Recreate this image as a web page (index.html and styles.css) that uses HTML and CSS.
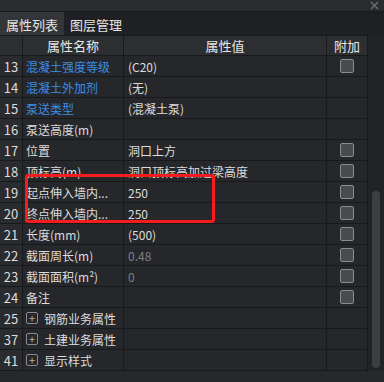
FILE: index.html
```html
<!DOCTYPE html>
<html lang="zh-CN">
  <head>
    <meta charset="UTF-8" />
    <title>属性列表</title>
    <link rel="stylesheet" href="styles.css">
  </head>
  <body>
    <div class="panel">
      <div class="titlebar">
        <svg class="close" width="9" height="9" viewBox="0 0 9 9">
          <path d="M1 1L8 8M8 1L1 8" stroke="#6f7073" stroke-width="1.4" />
        </svg>
      </div>
      <div class="tabs">
        <div class="tab active">属性列表</div>
        <div class="tab">图层管理</div>
      </div>
      <div class="content">
        <div class="table">
          <div class="row head">
            <div class="cell num"></div>
            <div class="cell name">属性名称</div>
            <div class="cell value">属性值</div>
            <div class="cell add">附加</div>
          </div>

          <div class="row">
            <div class="cell num">13</div>
            <div class="cell name blue">混凝土强度等级</div>
            <div class="cell value">(C20)</div>
            <div class="cell add"><span class="check"></span></div>
          </div>
          <div class="row">
            <div class="cell num">14</div>
            <div class="cell name blue">混凝土外加剂</div>
            <div class="cell value">(无)</div>
            <div class="cell add"></div>
          </div>
          <div class="row">
            <div class="cell num">15</div>
            <div class="cell name blue">泵送类型</div>
            <div class="cell value">(混凝土泵)</div>
            <div class="cell add"></div>
          </div>
          <div class="row">
            <div class="cell num">16</div>
            <div class="cell name">泵送高度(m)</div>
            <div class="cell value"></div>
            <div class="cell add"></div>
          </div>
          <div class="row">
            <div class="cell num">17</div>
            <div class="cell name">位置</div>
            <div class="cell value">洞口上方</div>
            <div class="cell add"><span class="check"></span></div>
          </div>
          <div class="row">
            <div class="cell num">18</div>
            <div class="cell name">顶标高(m)</div>
            <div class="cell value">洞口顶标高加过梁高度</div>
            <div class="cell add"><span class="check"></span></div>
          </div>
          <div class="row">
            <div class="cell num">19</div>
            <div class="cell name">起点伸入墙内...</div>
            <div class="cell value">250</div>
            <div class="cell add"><span class="check"></span></div>
          </div>
          <div class="row">
            <div class="cell num">20</div>
            <div class="cell name">终点伸入墙内...</div>
            <div class="cell value">250</div>
            <div class="cell add"><span class="check"></span></div>
          </div>
          <div class="row">
            <div class="cell num">21</div>
            <div class="cell name">长度(mm)</div>
            <div class="cell value">(500)</div>
            <div class="cell add"><span class="check"></span></div>
          </div>
          <div class="row">
            <div class="cell num">22</div>
            <div class="cell name">截面周长(m)</div>
            <div class="cell value grey">0.48</div>
            <div class="cell add"><span class="check"></span></div>
          </div>
          <div class="row">
            <div class="cell num">23</div>
            <div class="cell name">截面面积(m²)</div>
            <div class="cell value grey">0</div>
            <div class="cell add"><span class="check"></span></div>
          </div>
          <div class="row">
            <div class="cell num">24</div>
            <div class="cell name">备注</div>
            <div class="cell value"></div>
            <div class="cell add"><span class="check"></span></div>
          </div>
          <div class="row">
            <div class="cell num">25</div>
            <div class="cell name"><span class="plus">+</span>钢筋业务属性</div>
            <div class="cell value"></div>
            <div class="cell add"></div>
          </div>
          <div class="row">
            <div class="cell num">37</div>
            <div class="cell name"><span class="plus">+</span>土建业务属性</div>
            <div class="cell value"></div>
            <div class="cell add"></div>
          </div>
          <div class="row">
            <div class="cell num">41</div>
            <div class="cell name"><span class="plus">+</span>显示样式</div>
            <div class="cell value"></div>
            <div class="cell add"></div>
          </div>

          <!-- red highlight over rows 19 and 20 -->
          <div class="mark"></div>
        </div>
        <div class="scrollbar">
          <div class="thumb"></div>
        </div>
      </div>
      <div class="footer"></div>
    </div>
  </body>
</html>
```

FILE: styles.css
```css
* {
  margin: 0;
  padding: 0;
  box-sizing: border-box;
}

body {
  background-color: #1f2023;
  font-family: "Noto Sans CJK SC", "Noto Sans", sans-serif;
  font-size: 12px;
  color: #dcdcdc;
}

.panel {
  width: 384px;
  height: 382px;
  background-color: #1f2023;
  display: flex;
  flex-direction: column;
}

.titlebar {
  height: 12px;
  background-color: #2b2c2f;
  border-bottom: 1px solid #18191b;
  display: flex;
  justify-content: flex-end;
  align-items: center;
  padding-right: 5px;
}

.tabs {
  height: 23px;
  display: flex;
  background-color: #1f2023;
}

.tab {
  width: 64px;
  display: flex;
  align-items: center;
  justify-content: center;
  font-size: 13px;
  color: #e6e6e6;
  padding-top: 1px;
}

.tab.active {
  background-color: #343538;
}

.content {
  display: flex;
  height: 336px;
}

.table {
  position: relative;
  width: 368px;
  background-color: #26272a;
}

.row {
  display: flex;
  height: 21px;
  border-bottom: 1px solid #18191b;
}

.row.head {
  background-color: #2d2e31;
  border-top: 1px solid #18191b;
}

.cell {
  border-right: 1px solid #18191b;
  display: flex;
  align-items: center;
  white-space: nowrap;
  overflow: hidden;
}

.num {
  width: 23px;
  justify-content: center;
  font-size: 13px;
  background-color: #2a2b2e;
}

.head .num {
  background-color: #2d2e31;
}

.name {
  width: 101px;
  padding-left: 3px;
}

.value {
  width: 203px;
  padding-left: 4px;
}

.add {
  width: 41px;
  justify-content: center;
}

.head .name,
.head .value,
.head .add {
  justify-content: center;
  padding-left: 0;
  font-size: 13px;
  color: #e6e6e6;
}

.blue {
  color: #3a8ee6;
}

.grey {
  color: #7d7e81;
}

.check {
  width: 14px;
  height: 14px;
  border: 1px solid #8a8b8e;
  border-radius: 2px;
  background-color: #4a4b4e;
}

.plus {
  width: 12px;
  height: 12px;
  border: 1px solid #8a8b8e;
  border-radius: 2px;
  display: flex;
  align-items: center;
  justify-content: center;
  font-size: 11px;
  line-height: 1;
  color: #b0b0b0;
  margin-right: 6px;
}

.mark {
  position: absolute;
  left: 25px;
  top: 139px;
  width: 190px;
  height: 49px;
  border: 3px solid #f41c1c;
  border-radius: 3px;
}

.scrollbar {
  width: 16px;
  background-color: #222326;
  position: relative;
}

.thumb {
  position: absolute;
  left: 4px;
  top: 156px;
  width: 8px;
  height: 177px;
  border-radius: 4px;
  background-color: #3d3e41;
}

.footer {
  flex: 1;
  background-color: #27282b;
}
```
